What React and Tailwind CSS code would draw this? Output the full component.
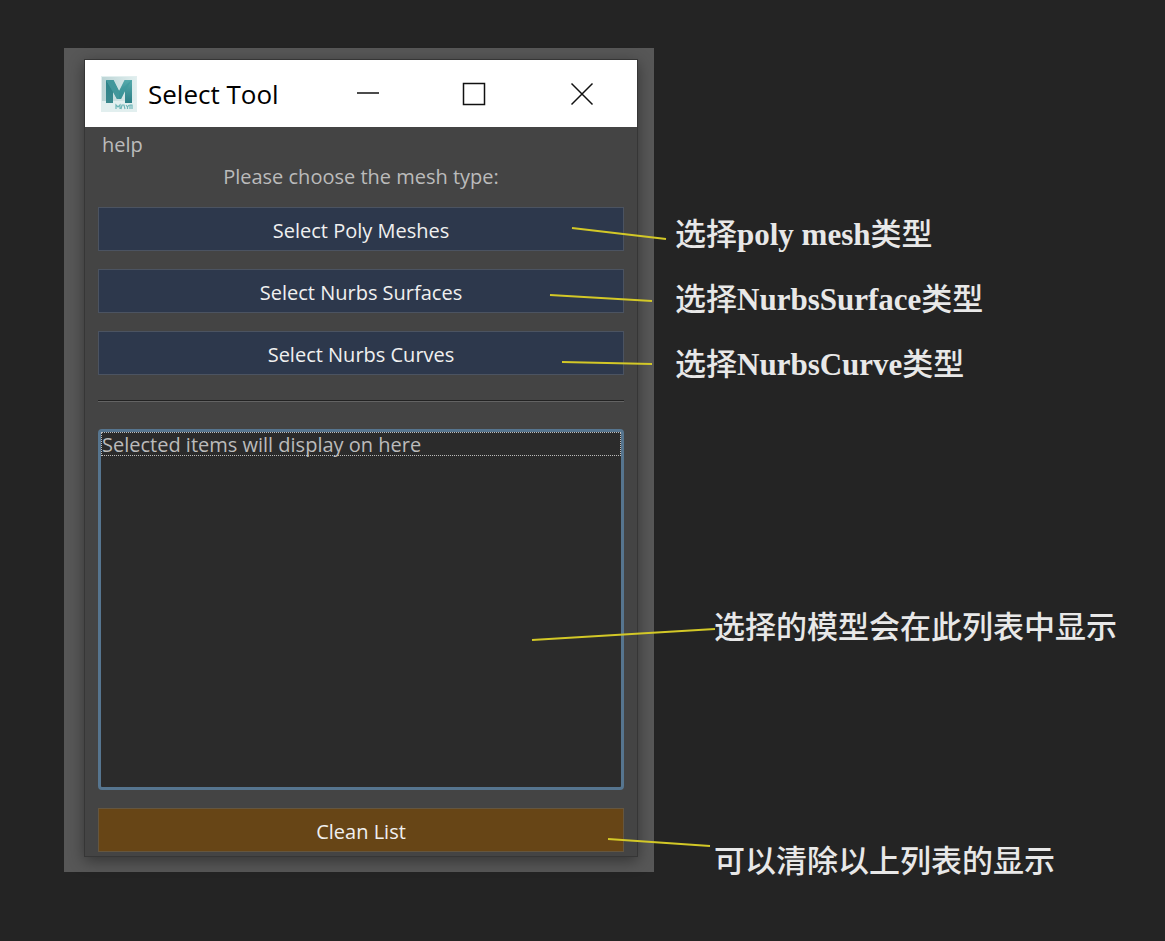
import React from "react";

const typeButtons = ["Select Poly Meshes", "Select Nurbs Surfaces", "Select Nurbs Curves"];

const typeNotes = [
  ["选择", "poly mesh", "类型"],
  ["选择", "NurbsSurface", "类型"],
  ["选择", "NurbsCurve", "类型"],
];

const leaderLines = [
  [572, 228, 666, 239],
  [550, 295, 652, 301],
  [562, 362, 652, 364],
  [532, 640, 715, 629],
  [608, 839, 710, 846],
];

function MayaIcon() {
  return (
    <svg viewBox="0 0 36 36" className="h-9 w-9 shrink-0" aria-hidden="true">
      <defs>
        <linearGradient id="mayaBg" x1="0" y1="0" x2="1" y2="0">
          <stop offset="0" stopColor="#bcd5d6" />
          <stop offset="1" stopColor="#e0eeee" />
        </linearGradient>
        <linearGradient id="mayaRight" x1="0" y1="0" x2="0" y2="1">
          <stop offset="0" stopColor="#55aaac" />
          <stop offset="1" stopColor="#2b7e85" />
        </linearGradient>
        <linearGradient id="mayaLeft" x1="0" y1="0" x2="0" y2="1">
          <stop offset="0" stopColor="#2c8389" />
          <stop offset="1" stopColor="#3c898e" />
        </linearGradient>
      </defs>
      <rect width="36" height="36" fill="#e2efef" />
      <rect x="1" y="1" width="34" height="24" fill="url(#mayaBg)" />
      <path d="M5 4h7.500L18 15l5.500-11H31v23h-7V15l-4 8h-4l-4-8v12H5z" fill="url(#mayaRight)" />
      <path d="M5 4l7 11v12H5z" fill="url(#mayaLeft)" />
      <path d="M5 4h7.500L18 15v8h-2z" fill="#43979b" />
      <path d="M31 4l-7 11-4 8h-2v-8z" fill="#3c9a9d" opacity="0.600" />
      <path d="M15 33v-4l2 2 2-2v4M20 33l1-4h2l1 4M25 29l1.500 2 1.500-2M26.500 31v2M29 33v-4h2v4" fill="none" stroke="#6fb5b7" strokeWidth="1.200" />
    </svg>
  );
}

function ToolButton({ children, className }) {
  return (
    <button type="button" className={`h-11 w-full border pt-1 text-xl leading-8 text-[#f0f0f0] ${className}`}>
      {children}
    </button>
  );
}

function TitleBar() {
  return (
    <header className="flex h-[67px] items-center bg-white pl-4 text-black">
      <MayaIcon />
      <h1 className="ml-[11px] flex-1 text-[26px] leading-9">Select Tool</h1>
      <div className="flex self-stretch">
        <button type="button" aria-label="Minimize" className="flex w-[106px] items-center justify-center">
          <svg viewBox="0 0 24 24" className="h-6 w-6" aria-hidden="true">
            <path d="M1 11h22" stroke="#111" strokeWidth="1.500" />
          </svg>
        </button>
        <button type="button" aria-label="Maximize" className="flex w-[106px] items-center justify-center">
          <svg viewBox="0 0 24 24" className="h-6 w-6" aria-hidden="true">
            <rect x="1.500" y="1.500" width="21" height="21" fill="none" stroke="#111" strokeWidth="1.500" />
          </svg>
        </button>
        <button type="button" aria-label="Close" className="flex w-[110px] items-center justify-center">
          <svg viewBox="0 0 24 24" className="h-6 w-6" aria-hidden="true">
            <path d="M1.500 1.500l21 21M22.500 1.500l-21 21" stroke="#111" strokeWidth="1.500" />
          </svg>
        </button>
      </div>
    </header>
  );
}

function ToolWindow() {
  return (
    <section className="border border-[#363636] bg-[#444444] shadow-[0_4px_14px_rgba(0,0,0,0.4)]">
      <TitleBar />
      <div className="px-[13px] pb-1 text-xl text-[#bbbbbb]">
        <nav className="flex h-9 items-center pl-1">
          <button type="button" className="leading-8">help</button>
        </nav>
        <p className="text-center leading-7">Please choose the mesh type:</p>
        <div className="mt-4 flex flex-col gap-[18px]">
          {typeButtons.map((label) => (
            <ToolButton key={label} className="border-[#4b5361] bg-[#2d384c]">{label}</ToolButton>
          ))}
        </div>
        <hr className="mt-[25px] h-0.5 border-t border-b border-t-[#222222] border-b-[#636363]" />
        <ul className="mt-[27px] min-h-[361px] rounded-sm border-3 border-[#56758f] bg-[#2b2b2b]">
          <li className="h-6 border border-dotted border-[#bbbbbb] leading-6">Selected items will display on here</li>
        </ul>
        <div className="mt-[18px]">
          <ToolButton className="border-[#65563f] bg-[#674516]">Clean List</ToolButton>
        </div>
      </div>
    </section>
  );
}

export default function App() {
  return (
    <main className="relative flex min-h-screen items-start bg-[#242424] pt-12 pb-16 pl-16 font-['Open_Sans',sans-serif]">
      <div className="w-full max-w-[590px] bg-[#575757] pt-[11px] pr-4 pb-[15px] pl-5">
        <ToolWindow />
      </div>

      <aside className="shrink-0 pt-[163px] pl-[21px] font-['Liberation_Serif','Noto_Sans_CJK_SC',serif] text-[31px] leading-[47px] font-medium whitespace-nowrap text-[#e8e8e8]">
        <div className="flex flex-col gap-[18px]">
          {typeNotes.map(([before, name, after]) => (
            <p key={name}>
              {before}
              <span className="font-bold">{name}</span>
              {after}
            </p>
          ))}
        </div>
        <div className="mt-[216px] flex flex-col gap-[187px] pl-[39px]">
          <p>选择的模型会在此列表中显示</p>
          <p>可以清除以上列表的显示</p>
        </div>
      </aside>

      <svg className="pointer-events-none absolute top-0 left-0 h-[941px] w-[1165px]" viewBox="0 0 1165 941" aria-hidden="true">
        {leaderLines.map(([x1, y1, x2, y2]) => (
          <line key={y1} x1={x1} y1={y1} x2={x2} y2={y2} stroke="#d3c827" strokeWidth="2" />
        ))}
      </svg>
    </main>
  );
}
